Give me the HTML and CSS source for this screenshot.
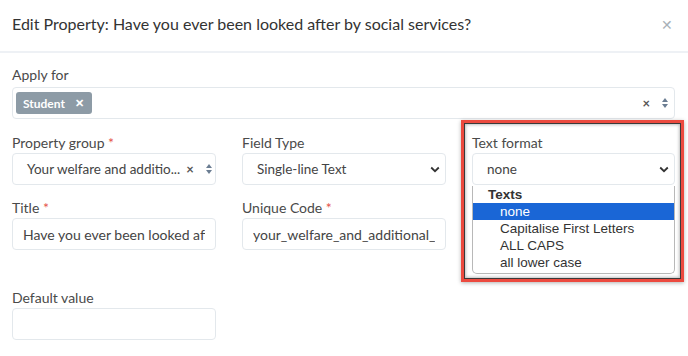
FILE: index.html
```html
<!DOCTYPE html>
<html lang="en">
<head>
    <meta charset="UTF-8">
    <title>Edit Property</title>
    <link rel="stylesheet" href="styles.css">
</head>
<body>
    <div class="modal">
        <div class="modal-header">
            <h1>Edit Property: Have you ever been looked after by social services?</h1>
            <span class="close">&#x2715;</span>
        </div>
        <div class="modal-body">
            <div class="field full">
                <label>Apply for</label>
                <div class="box tags">
                    <span class="tag">Student <b>&#x2715;</b></span>
                    <span class="spacer"></span>
                    <span class="clear">&times;</span>
                    <span class="updown"><i class="up"></i><i class="down"></i></span>
                </div>
            </div>

            <div class="field">
                <label>Property group <em>*</em></label>
                <div class="box select">
                    <span class="value">Your welfare and additio...</span>
                    <span class="spacer"></span>
                    <span class="clear">&times;</span>
                    <span class="updown"><i class="up"></i><i class="down"></i></span>
                </div>
            </div>
            <div class="field">
                <label>Field Type</label>
                <div class="box select">
                    <span class="value">Single-line Text</span>
                    <span class="spacer"></span>
                    <svg class="chev" width="10" height="7" viewBox="0 0 10 7"><path d="M1.2 1.5 L5 5.2 L8.8 1.5" fill="none" stroke="#333" stroke-width="1.8"/></svg>
                </div>
            </div>
            <div class="field format">
                <label>Text format</label>
                <div class="box select">
                    <span class="value">none</span>
                    <span class="spacer"></span>
                    <svg class="chev" width="10" height="7" viewBox="0 0 10 7"><path d="M1.2 1.5 L5 5.2 L8.8 1.5" fill="none" stroke="#333" stroke-width="1.8"/></svg>
                </div>
                <ul class="dropdown">
                    <li class="group">Texts</li>
                    <li class="active">none</li>
                    <li>Capitalise First Letters</li>
                    <li>ALL CAPS</li>
                    <li>all lower case</li>
                </ul>
                <div class="highlight"></div>
            </div>

            <div class="field">
                <label>Title <em>*</em></label>
                <input class="box text" type="text" value="Have you ever been looked after by social services?">
            </div>
            <div class="field">
                <label>Unique Code <em>*</em></label>
                <input class="box text" type="text" value="your_welfare_and_additional_support">
            </div>
            <div class="field"></div>

            <div class="field spaced">
                <label>Default value</label>
                <input class="box text" type="text" value="">
            </div>
        </div>
    </div>
</body>
</html>
```

FILE: styles.css
```css
* {
    box-sizing: border-box;
    margin: 0;
    padding: 0;
}

body {
    background: #fff;
    font-family: Lato, "Open Sans", sans-serif;
    color: #444;
    width: 688px;
    height: 356px;
    overflow: hidden;
}

.modal-header {
    display: flex;
    align-items: center;
    height: 53px;
    padding: 0 15px 5px 12px;
    border-bottom: 2px solid #eef1f5;
}

.modal-header h1 {
    flex: 1;
    font-size: 16px;
    font-weight: 400;
    color: #333;
}

.close {
    color: #a9b1b8;
    font-size: 14px;
    margin-top: 3px;
}

.modal-body {
    display: grid;
    grid-template-columns: 204px 204px 203px;
    column-gap: 26px;
    row-gap: 15px;
    padding: 14px 12px 0 12px;
}

.field.full {
    grid-column: 1 / -1;
    margin-bottom: 1px;
}

.field.spaced {
    margin-top: 25px;
}

.field label {
    display: block;
    font-size: 14px;
    line-height: 16px;
    color: #4a4a4a;
    margin-bottom: 2px;
}

.field.full label {
    margin-bottom: 4px;
}

.field label em {
    font-style: normal;
    color: #e5534b;
}

.box {
    display: flex;
    align-items: center;
    width: 100%;
    height: 32px;
    border: 1px solid #e3e8ec;
    border-radius: 4px;
    background: #fff;
    font-family: Lato, "Open Sans", sans-serif;
    font-size: 13.5px;
    color: #444;
    overflow: hidden;
    white-space: nowrap;
}

.box.tags {
    padding: 0 6px 0 3px;
}

.tag {
    display: flex;
    align-items: center;
    gap: 10px;
    height: 22px;
    padding: 0 8px 0 7px;
    background: #8d9ba6;
    border-radius: 3px;
    color: #fff;
    font-size: 12px;
    font-weight: 700;
}

.tag b {
    font-size: 11px;
}

.spacer {
    flex: 1;
}

.clear {
    font-size: 13px;
    font-weight: 700;
    color: #555;
    margin-right: 12px;
}

.updown {
    display: flex;
    flex-direction: column;
    gap: 2px;
}

.updown i {
    width: 0;
    height: 0;
    border-left: 3px solid transparent;
    border-right: 3px solid transparent;
}

.updown .up {
    border-bottom: 4px solid #6b7d92;
}

.updown .down {
    border-top: 4px solid #6b7d92;
}

.box.select {
    padding: 0 5px 0 14px;
}

.box.select .clear {
    margin-left: 6px;
}

input.box.text {
    display: block;
    padding: 0 10px;
    font-size: 14px;
    outline: none;
}

.format {
    position: relative;
}

.dropdown {
    position: absolute;
    top: 51px;
    left: 0;
    width: 203px;
    list-style: none;
    background: #fff;
    border: 1px solid #b8b8b8;
    border-top: none;
    border-radius: 0 0 5px 5px;
    font-family: "Liberation Sans", Arial, sans-serif;
    font-size: 13.5px;
    color: #333;
    padding: 0 0 2px 0;
    z-index: 2;
}

.dropdown li {
    height: 17px;
    line-height: 17px;
    padding-left: 27px;
}

.dropdown li.group {
    padding-left: 15px;
    font-weight: 700;
}

.dropdown li.active {
    background: #1a66d6;
    color: #fff;
}

.highlight {
    position: absolute;
    top: -15px;
    left: -11px;
    width: 223px;
    height: 162px;
    border: 3px solid #ec4a3f;
    box-shadow: inset 0 0 0 1px #3a3a3a, inset 0 0 3px 2px rgba(0, 0, 0, 0.25), 0 1px 4px rgba(0, 0, 0, 0.3);
    z-index: 3;
    pointer-events: none;
}
```
